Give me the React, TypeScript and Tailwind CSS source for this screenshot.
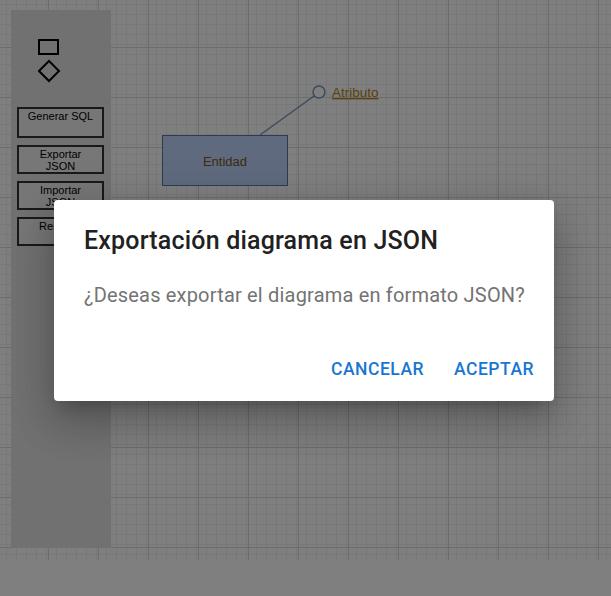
import React from 'react';

// Canvas grid: minor lines every 10px, major every 50px
const GridBackground = () => (
    <svg className="absolute inset-0 w-full h-full" width="611" height="560">
        <defs>
            <pattern id="minor" width="10" height="10" patternUnits="userSpaceOnUse" x="8" y="7">
                <path d="M 0 0.5 H 10 M 0.5 0 V 10" stroke="#f1f1f1" strokeWidth="1" fill="none" />
            </pattern>
            <pattern id="major" width="50" height="50" patternUnits="userSpaceOnUse" x="48" y="47">
                <rect width="50" height="50" fill="url(#minor)" />
                <path d="M 0 0.5 H 50 M 0.5 0 V 50" stroke="#d9d9d9" strokeWidth="1" fill="none" />
            </pattern>
        </defs>
        <rect width="100%" height="100%" fill="white" />
        <rect width="100%" height="100%" fill="url(#major)" />
    </svg>
);

const ToolButton: React.FC<{ label: string; className?: string }> = ({ label, className }) => (
    <button
        className={`w-[87px] flex flex-col items-center justify-start px-[6px] pt-[1px] border-2 border-[#333] bg-[#efefef] text-black text-[11px] leading-[12px] text-center font-['Liberation_Sans',Arial,sans-serif] ${className ?? ''}`}
    >
        {label}
    </button>
);

const Sidebar = () => (
    <div className="w-[100px] h-[538px] bg-[#e3e3e3] flex flex-col pl-[6px] pt-[29px]">
        {/* Figuras */}
        <svg className="ml-[21px]" width="24" height="46" viewBox="0 0 24 46">
            <rect x="1" y="1" width="19" height="14" fill="none" stroke="black" strokeWidth="2" />
            <path d="M 11 22 L 21 32 L 11 42 L 1 32 Z" fill="none" stroke="black" strokeWidth="2" />
        </svg>

        <div className="mt-[22px] flex flex-col">
            <ToolButton label="Generar SQL" className="h-[31px]" />
            <ToolButton label="Exportar JSON" className="h-[29px] mt-[7px]" />
            <ToolButton label="Importar JSON" className="h-[29px] mt-[7px]" />
            <ToolButton label="Reiniciar" className="h-[29px] mt-[7px]" />
        </div>
    </div>
);

const Diagram = () => (
    <svg className="absolute left-0 top-0" width="611" height="560">
        <line x1="260" y1="135" x2="314" y2="96" stroke="#7c94bc" strokeWidth="1.5" />
        <circle cx="319" cy="92" r="6" fill="white" stroke="#7c94bc" strokeWidth="1.5" />
        <rect x="162.5" y="135.5" width="125" height="50" fill="#bfd5ff" stroke="#5876a4" strokeWidth="1" />
        <text x="225" y="166" textAnchor="middle" fontSize="13" fill="#7a5526" fontFamily="Liberation Sans, Arial, sans-serif">
            Entidad
        </text>
        <text x="332" y="97" fontSize="13.5" fill="#b88218" textDecoration="underline" fontFamily="Liberation Sans, Arial, sans-serif">
            Atributo
        </text>
    </svg>
);

export default function App() {
    return (
        <div className="relative w-[611px] h-[596px] bg-white overflow-hidden font-['Roboto',sans-serif]">
            {/* Lienzo */}
            <div className="relative h-[560px]">
                <GridBackground />
                <Diagram />
                <div className="relative p-[10px] pl-[11px]">
                    <Sidebar />
                </div>
            </div>

            {/* Diálogo */}
            <div className="absolute inset-0 bg-black/50 flex items-start justify-center pt-[200px] pr-[3px]">
                <div className="w-[500px] h-[201px] bg-white rounded-[4px] shadow-[0_11px_15px_-7px_rgba(0,0,0,0.2),0_24px_38px_3px_rgba(0,0,0,0.14),0_9px_46px_8px_rgba(0,0,0,0.12)] flex flex-col">
                    <h2 className="pt-[21px] px-[30px] text-[25px] leading-[40px] font-medium text-[#212121] tracking-[0.0075em] whitespace-nowrap">
                        Exportación diagrama en JSON
                    </h2>
                    <p className="mt-[19px] px-[30px] text-[20px] leading-[30px] text-[#737373] tracking-[0.00938em] whitespace-nowrap">
                        ¿Deseas exportar el diagrama en formato JSON?
                    </p>
                    <div className="mt-auto flex justify-end items-center px-[10px] pb-[10px]">
                        <button className="px-[10px] py-[7px] text-[17.5px] leading-[30px] font-medium uppercase tracking-[0.02857em] text-[#1976d2]">
                            Cancelar
                        </button>
                        <button className="ml-[10px] px-[10px] py-[7px] text-[17.5px] leading-[30px] font-medium uppercase tracking-[0.02857em] text-[#1976d2]">
                            Aceptar
                        </button>
                    </div>
                </div>
            </div>
        </div>
    );
}
